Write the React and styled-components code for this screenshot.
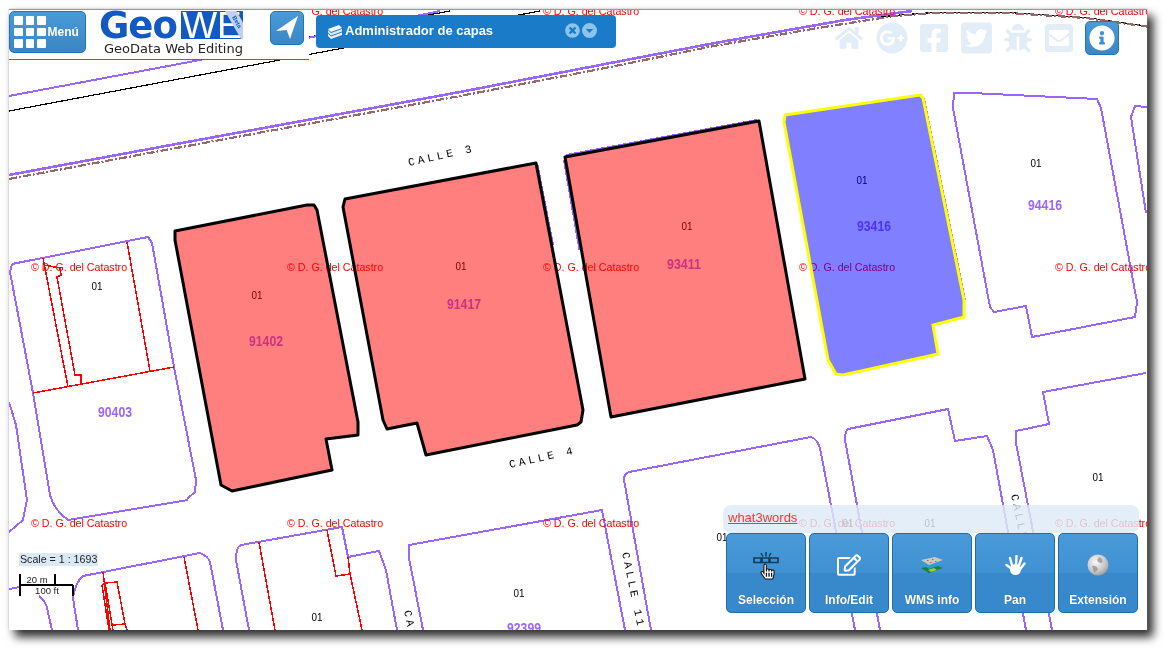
import React from 'react';
import styled, { createGlobalStyle } from 'styled-components';
import { FaHome, FaGooglePlus, FaFacebookSquare, FaTwitterSquare, FaBug, FaEnvelopeSquare, FaInfoCircle, FaRegEdit, FaHandPointer, FaTimesCircle } from 'react-icons/fa';

const GlobalStyle = createGlobalStyle`
  html, body { margin: 0; padding: 0; background: #fff; }
  body { font-family: "Liberation Sans", Arial, sans-serif; }
`;

// map data, in page pixels (the svg viewBox starts at the window corner)
const purpleLines = [
  'M9 96 L200 60 L440 11',
  'M1147 107 L1135 106 L1131 117 L1146 213',
  'M12 264 L148 237 L152 243 L174 367 L196 480 L195 492 L187 499',
  'M12 264 L10 272 L33 393 L50 495 Q54 510 68 520 L188 500',
  'M9 402 L16 425 L27 500 L23 520 L9 532',
  'M9 589 L20 587',
  'M39 596 Q46 602 47 608 L52 630',
  'M78 630 L73 598 Q75 583 83 576 L200 553 Q208 556 210 562 L223 630',
  'M249 630 L236 560 Q236 547 241 545 L342 527 L348 557 L379 551 L386 570 L397 630',
  'M423 630 L409 558 L409 545 L602 510 L625 630',
  'M651 630 L624 480 L624 477 Q626 473 629 472 L811 437 Q817 439 820 448 L855 630',
  'M880 630 L845 440 Q845 431 848 429 L948 409 L955 441 L987 436 L993 450 L1026 630',
  'M1052 630 L1016 443 L1016 431 L1049 424 L1043 392 L1146 373',
  'M954 93 L971 93 L1097 99 L1101 108 L1137 302 L1135 317 L1032 337 L1026 306 L994 312 L990 307 L953 108 Z',
  'M920 94 L924 99 L965 300',
  'M537.500 165 L553 245',
  'M564 160 L579.500 250',
  'M566 155 L757 120',
];

const redLines = [
  'M33 393 L174 367',
  'M43 258 L68 387',
  'M127 242 L150 371',
  'M44 265 L60 268 L61 275 L57 277 L75 375 L81 375 L81 384',
  'M103 572 L110 630',
  'M102 585 L105 583 L117 582 L125 624 L127 630',
  'M102 585 L109 630',
  'M105 583 L113 630',
  'M113 625 L125 624',
  'M184 557 L198 630',
  'M259 542 L275 630',
  'M327 530 L336 576 L350 574 L348 557',
  'M350 574 L362 630',
];

const tags = [
  [97, 286], [257, 295], [461, 266], [687, 226], [862, 180], [1036, 163],
  [1098, 477], [519, 593], [317, 617], [930, 523], [848, 523], [722, 537],
];

const parcelNumbers = [
  [115, 412, '90403'], [266, 341, '91402'], [464, 304, '91417'], [684, 264, '93411'],
  [874, 226, '93416'], [1045, 205, '94416'], [524, 628, '92399'],
];

const copyrights = [11, 267, 523].flatMap(y => [31, 287, 543, 799, 1055].map(x => [x, y]));

const streets = [
  [409, 166, -12.5, 'CALLE 3'],
  [510, 468, -12.5, 'CALLE 4'],
  [622, 553, 78, 'CALLE 11'],
  [404, 611, 78, 'CALLE'],
  [1011, 495, 78, 'CALLE'],
];

const selectedRed = [
  'M175 231 L307 205 L314 205 L317 210 L358 422 L358 435 L326 439 L332 470 L232 491 L221 485 L175 240 Z',
  'M345 199 L536 163 L583 410 L581 422 L577 425 L426 455 L417 423 L387 429 L383 420 L343 207 Z',
  'M565 157 L759 121 L805 379 L611 417 Z',
];

const trackPath = 'M9 179 L160 151 L460 96 L600 69 L714 46 L818 28 L894 16 L933 13 L1009 13 L1086 18 L1150 27';

const App = () => {
  return (
    <>
      <GlobalStyle />
      <Page>
        <Viewer>
          <MapSvg viewBox="9 10 1138 620">
            <Thin d="M9 111 L540 11" />
            <Thin d="M309 37 L450 11" />
            <Thin d="M880 17 L894 15.500 L933 12.500 L1009 12.500 L1086 17.500 L1150 26.500" />
            <Road d="M9 175 L160 147 L460 92 L600 65 L715 43 L845 20 L912 11" />
            <Track d={trackPath} />
            {purpleLines.map(d => <Outline key={d} d={d} />)}
            {redLines.map(d => <Inner key={d} d={d} />)}
            {copyrights.map(([x, y]) => <Copyright key={`${x}-${y}`} x={x} y={y + 4}>© D. G. del Catastro</Copyright>)}
            {tags.map(([x, y]) => <Tag key={`${x}-${y}`} x={x} y={y + 4} textLength="11" lengthAdjust="spacingAndGlyphs">01</Tag>)}
            {parcelNumbers.map(([x, y, t]) => <ParcelNumber key={t} x={x} y={y + 5} textLength="34" lengthAdjust="spacingAndGlyphs">{t}</ParcelNumber>)}
            {streets.map(([x, y, a, t]) => <Street key={t + x} x={x} y={y} transform={`rotate(${a} ${x} ${y})`}>{t}</Street>)}
            {selectedRed.map(d => <Selected key={d} d={d} />)}
            <Highlighted d="M785 115 L920 95 L923 98 L964 300 L964 317 L933 325 L938 354 L843 375 L836 374 L828 360 L784 122 Z" />
          </MapSvg>

          <TopBar>
            <Brand>
              <MenuButton>
                <MenuGrid>{Array.from({ length: 9 }).map((_, i) => <MenuDot key={i} />)}</MenuGrid>
                <MenuLabel>Menú</MenuLabel>
              </MenuButton>
              <Logo>
                <LogoMark>
                  <LogoGeo>Geo</LogoGeo>
                  <LogoWe>WE<Ribbon>Beta</Ribbon></LogoWe>
                </LogoMark>
                <LogoTag>GeoData Web Editing</LogoTag>
              </Logo>
              <LocateButton>
                <svg width="32" height="32" viewBox="1 1 32 32"><path d="M6 20 L28 5 L20 28 L16.7 19 Z" fill="#fff" /></svg>
              </LocateButton>
            </Brand>

            <LayersPanel>
              <svg width="16" height="16" viewBox="0 0 16 16">
                <path d="M1 5 L12 1 L15 4 L4 8 Z" fill="#f6f6f6" />
                <path d="M1 6 L4 9 L15 5 L15 7.500 L4 11.500 L1 8.500 Z" fill="#e6e6e6" />
                <path d="M1 9.500 L4 12.500 L15 8.500 L15 11 L4 15 L1 12 Z" fill="#f0f0f0" />
              </svg>
              <PanelTitle>Administrador de capas</PanelTitle>
              <PanelControls>
                <FaTimesCircle size={15} />
                <svg width="15" height="15" viewBox="0 0 15 15">
                  <path d="M7.500 0 A7.500 7.500 0 1 1 7.500 15 A7.500 7.500 0 1 1 7.500 0 Z M3.800 6 L7.500 10 L11.200 6 Z" fill="currentColor" fillRule="evenodd" />
                </svg>
              </PanelControls>
            </LayersPanel>

            <SocialBar>
              <FaintIcon $w={28}><FaHome size={28} /></FaintIcon>
              <FaintIcon $w={32}><FaGooglePlus size={32} /></FaintIcon>
              <FaintIcon $w={28}><FaFacebookSquare size={32} /></FaintIcon>
              <FaintIcon $w={31}><FaTwitterSquare size={36} /></FaintIcon>
              <FaintIcon $w={28}><FaBug size={28} /></FaintIcon>
              <FaintIcon $w={28}><FaEnvelopeSquare size={32} /></FaintIcon>
              <InfoButton><FaInfoCircle size={26} /></InfoButton>
            </SocialBar>
          </TopBar>

          <ScaleBox>
            <ScaleText>Scale = 1 : 1693</ScaleText>
            <svg width="56" height="24" viewBox="0 0 56 24">
              <path d="M1 1 V23 M1 12 H54 M36 1 V12 M54 12 V23" stroke="#000" strokeWidth="2" fill="none" />
              <ScaleTick x="18" y="9.500">20 m</ScaleTick>
              <ScaleTick x="28" y="21">100 ft</ScaleTick>
            </svg>
          </ScaleBox>

          <Dock>
            <WordsStrip><WordsLink>what3words</WordsLink></WordsStrip>
            <ToolRow>
              <ToolButton>
                <ToolIcon>
                  <SelectIcon>
                    <svg width="26" height="14" viewBox="0 0 26 14">
                      <path d="M8 1 L10 4.500 M13 0 V4.500 M18 1 L16 4.500" stroke="#123b5c" strokeWidth="1.500" />
                      <path d="M1 6 H8 V10.500 H1 Z M9 6 H16 V10.500 H9 Z M17 6 H25 V10.500 H17 Z" fill="none" stroke="#123b5c" strokeWidth="1.600" />
                    </svg>
                    <PointerHand><FaHandPointer size={15} /></PointerHand>
                  </SelectIcon>
                </ToolIcon>
                <ToolLabel>Selección</ToolLabel>
              </ToolButton>
              <ToolButton>
                <ToolIcon><FaRegEdit size={24} color="#fff" /></ToolIcon>
                <ToolLabel>Info/Edit</ToolLabel>
              </ToolButton>
              <ToolButton>
                <ToolIcon>
                  <svg width="24" height="18" viewBox="0 0 24 18">
                    <path d="M1 12 L15 9 L23 12 L9 17 Z" fill="#1d7f3c" />
                    <path d="M8 14 L14 12 L17 14 L11 16 Z" fill="#9ecb3a" />
                    <path d="M1 8 L15 5 L23 8 L9 13 Z" fill="#2f9fd8" opacity=".9" />
                    <path d="M1 4 L15 1 L23 4 L9 9 Z" fill="#c9c9c4" />
                    <path d="M7 4 h1.500 v1 h-1.500 Z M12 3 h1.500 v1 h-1.500 Z M15 5 h1.500 v1 h-1.500 Z M10 6 h1.500 v1 h-1.500 Z" fill="#d8524a" />
                  </svg>
                </ToolIcon>
                <ToolLabel>WMS info</ToolLabel>
              </ToolButton>
              <ToolButton>
                <ToolIcon>
                  <svg width="21" height="21" viewBox="0 0 21 21">
                    <ellipse cx="10.500" cy="14.500" rx="5.500" ry="5.500" fill="#fff" />
                    <path d="M7 14 L1.500 10 M7.500 12 L5 3 M11 11 L11.500 1 M13.500 12 L16.500 3 M14.500 15 L19.500 8.500" stroke="#fff" strokeWidth="2.400" strokeLinecap="round" />
                  </svg>
                </ToolIcon>
                <ToolLabel>Pan</ToolLabel>
              </ToolButton>
              <ToolButton>
                <ToolIcon>
                  <svg width="22" height="22" viewBox="0 0 22 22">
                    <defs>
                      <radialGradient id="globe" cx=".4" cy=".35" r=".75">
                        <stop offset="0" stopColor="#fafafa" />
                        <stop offset=".6" stopColor="#c8c8c8" />
                        <stop offset="1" stopColor="#8f8f8f" />
                      </radialGradient>
                    </defs>
                    <circle cx="11" cy="11" r="10.500" fill="url(#globe)" />
                    <path d="M12 3 Q17 5 15 9 Q11 9 10 6 Z M5 12 Q9 11 11 15 Q9 19 7 18 Z" fill="#8c8c8c" opacity=".7" />
                  </svg>
                </ToolIcon>
                <ToolLabel>Extensión</ToolLabel>
              </ToolButton>
            </ToolRow>
          </Dock>
        </Viewer>
      </Page>
    </>
  );
};

const Page = styled.div`
  width: 1168px;
  height: 651px;
  padding: 10px 0 0 9px;
  box-sizing: border-box;
  overflow: hidden;
`;

const Viewer = styled.div`
  position: relative;
  width: 1138px;
  height: 620px;
  background: #fff;
  overflow: hidden;
  box-shadow: 0 -1px 1px #999;
  filter: drop-shadow(6px 7px 5px rgba(0, 0, 0, 0.8)) drop-shadow(0 0 3px rgba(0, 0, 0, 0.08));
`;

const MapSvg = styled.svg`
  display: block;
  width: 1138px;
  height: 620px;
  background: #fff;
`;

const Road = styled.path`
  fill: none;
  stroke: #9966ff;
  stroke-width: 2.600;
  shape-rendering: crispEdges;
`;

const Track = styled.path`
  fill: none;
  stroke: #96696c;
  stroke-width: 2.200;
  stroke-dasharray: 8 2 2 2;
  shape-rendering: crispEdges;
`;

const Thin = styled.path`
  fill: none;
  stroke: #000;
  stroke-width: 1.200;
  shape-rendering: crispEdges;
`;

const Outline = styled.path`
  fill: none;
  stroke: #9966ff;
  stroke-width: 2;
  shape-rendering: crispEdges;
`;

const Inner = styled.path`
  fill: none;
  stroke: #ff0000;
  stroke-width: 1.500;
  shape-rendering: crispEdges;
`;

const Selected = styled.path`
  fill: rgba(255, 0, 0, 0.5);
  stroke: #000;
  stroke-width: 3;
  stroke-linejoin: round;
`;

const Highlighted = styled.path`
  fill: rgba(0, 0, 255, 0.5);
  stroke: #ffff00;
  stroke-width: 3;
`;

const Copyright = styled.text`
  font-family: "Liberation Sans", Arial, sans-serif;
  font-size: 10.67px;
  fill: #ff0000;
`;

const Tag = styled.text`
  font-family: "Liberation Sans", Arial, sans-serif;
  font-size: 11px;
  fill: #000;
  text-anchor: middle;
`;

const ParcelNumber = styled.text`
  font-family: "Liberation Sans", Arial, sans-serif;
  font-size: 14px;
  font-weight: 700;
  fill: #9966ff;
  text-anchor: middle;
`;

const Street = styled.text`
  font-family: "Liberation Mono", monospace;
  font-size: 11px;
  letter-spacing: 3.100px;
  fill: #000;
`;

const TopBar = styled.div`
  position: absolute;
  top: 0;
  left: 0;
  right: 0;
  display: flex;
  align-items: flex-start;
`;

const Brand = styled.div`
  width: 300px;
  height: 48px;
  padding-top: 1px;
  display: flex;
  align-items: flex-start;
  background: #fff;
  border-bottom: 1px solid #1c7bc0;
`;

const BlueButton = styled.div`
  box-sizing: border-box;
  flex-shrink: 0;
  border: 1px solid #1f76b4;
  border-radius: 5px;
  background: linear-gradient(#4a9ad8, #3a86c6);
  color: #fff;
  display: flex;
  align-items: center;
  justify-content: center;
`;

const MenuButton = styled(BlueButton)`
  width: 77px;
  height: 42px;
  justify-content: flex-start;
  padding-left: 4px;
  gap: 2px;
`;

const MenuGrid = styled.div`
  display: grid;
  grid-template-columns: repeat(3, 8.500px);
  grid-auto-rows: 8.500px;
  gap: 3px;
`;

const MenuDot = styled.span`
  background: #fff;
  border-radius: 1px;
`;

const MenuLabel = styled.span`
  font-size: 12px;
  font-weight: 700;
`;

const Logo = styled.div`
  width: 158px;
  flex-shrink: 0;
  margin-left: 13px;
  display: flex;
  flex-direction: column;
`;

const LogoMark = styled.div`
  display: flex;
  align-items: flex-start;
  height: 29px;
`;

const LogoGeo = styled.span`
  width: 82px;
  font-family: "DejaVu Sans", sans-serif;
  font-size: 37px;
  font-weight: 700;
  line-height: 29px;
  letter-spacing: -1px;
  color: #1259c3;
`;

const LogoWe = styled.span`
  position: relative;
  width: 62px;
  height: 28px;
  overflow: hidden;
  background: #1259c3;
  color: #fff;
  font-size: 37px;
  line-height: 29px;
  text-align: center;
`;

const Ribbon = styled.span`
  position: absolute;
  top: 6px;
  left: 36px;
  width: 40px;
  height: 10px;
  transform: rotate(60deg);
  background: #bcd2ee;
  color: #1259c3;
  font-size: 6px;
  font-weight: 700;
  line-height: 10px;
  text-align: center;
`;

const LogoTag = styled.span`
  margin: 1px 0 0 5px;
  font-family: "DejaVu Sans", sans-serif;
  font-size: 13px;
  line-height: 15px;
  color: #222;
  white-space: nowrap;
`;

const LocateButton = styled(BlueButton)`
  width: 34px;
  height: 34px;
  margin-left: 13px;
`;

const LayersPanel = styled.div`
  width: 300px;
  height: 33px;
  margin: 5px 0 0 7px;
  padding: 0 19px 0 11px;
  box-sizing: border-box;
  display: flex;
  align-items: center;
  gap: 2px;
  border-radius: 4px;
  background: #1a7cc9;
  color: #fff;
`;

const PanelTitle = styled.span`
  flex: 1;
  padding-bottom: 2px;
  font-size: 13px;
  font-weight: 700;
  white-space: nowrap;
`;

const PanelControls = styled.span`
  display: flex;
  gap: 2px;
  margin-bottom: 2px;
  color: #8ec3ea;
`;

const SocialBar = styled.div`
  margin: 11px 28px 0 auto;
  display: flex;
  align-items: center;
  gap: 12.500px;
  height: 34px;
`;

const FaintIcon = styled.span`
  width: ${props => props.$w}px;
  display: flex;
  justify-content: center;
  color: #e3edf8;
`;

const InfoButton = styled(BlueButton)`
  width: 34px;
  height: 34px;
`;

const ScaleBox = styled.div`
  position: absolute;
  left: 10px;
  top: 543px;
  display: flex;
  flex-direction: column;
  gap: 7px;
`;

const ScaleText = styled.span`
  align-self: flex-start;
  padding: 0 1px;
  font-size: 10.67px;
  line-height: 13px;
  color: #222;
  background: #dbe9f6;
`;

const ScaleTick = styled.text`
  font-family: "Liberation Sans", Arial, sans-serif;
  font-size: 9.500px;
  fill: #222;
  text-anchor: middle;
`;

const Dock = styled.div`
  position: absolute;
  left: 714px;
  top: 495px;
  width: 416px;
`;

const WordsStrip = styled.div`
  height: 28px;
  padding: 5px 0 0 5px;
  box-sizing: border-box;
  border-radius: 8px;
  background: rgba(222, 234, 246, 0.82);
`;

const WordsLink = styled.span`
  display: block;
  font-size: 13px;
  line-height: 16px;
  color: #ff3333;
  text-decoration: underline;
`;

const ToolRow = styled.div`
  display: flex;
  gap: 3px;
  margin-left: 3px;
`;

const ToolButton = styled.div`
  width: 80px;
  height: 80px;
  box-sizing: border-box;
  display: flex;
  flex-direction: column;
  align-items: center;
  border: 1px solid #1c6ea8;
  border-radius: 5px;
  background: linear-gradient(#4a9ad8 0, #3f91d2 50%, #3889cb 50%, #3889cb 100%);
  color: #fff;
`;

const ToolIcon = styled.div`
  height: 58px;
  padding-top: 4px;
  box-sizing: border-box;
  display: flex;
  align-items: center;
  justify-content: center;
`;

const ToolLabel = styled.span`
  font-size: 12px;
  font-weight: 700;
  line-height: 16px;
  text-shadow: 0 0 1px rgba(0, 0, 0, 0.3);
`;

const SelectIcon = styled.div`
  position: relative;
  width: 26px;
  height: 28px;
  margin-top: 2px;
`;

const PointerHand = styled.span`
  position: absolute;
  left: 7px;
  top: 12px;
  color: #fff;
  svg { stroke: #111; stroke-width: 36px; overflow: visible; }
`;

export default App;
